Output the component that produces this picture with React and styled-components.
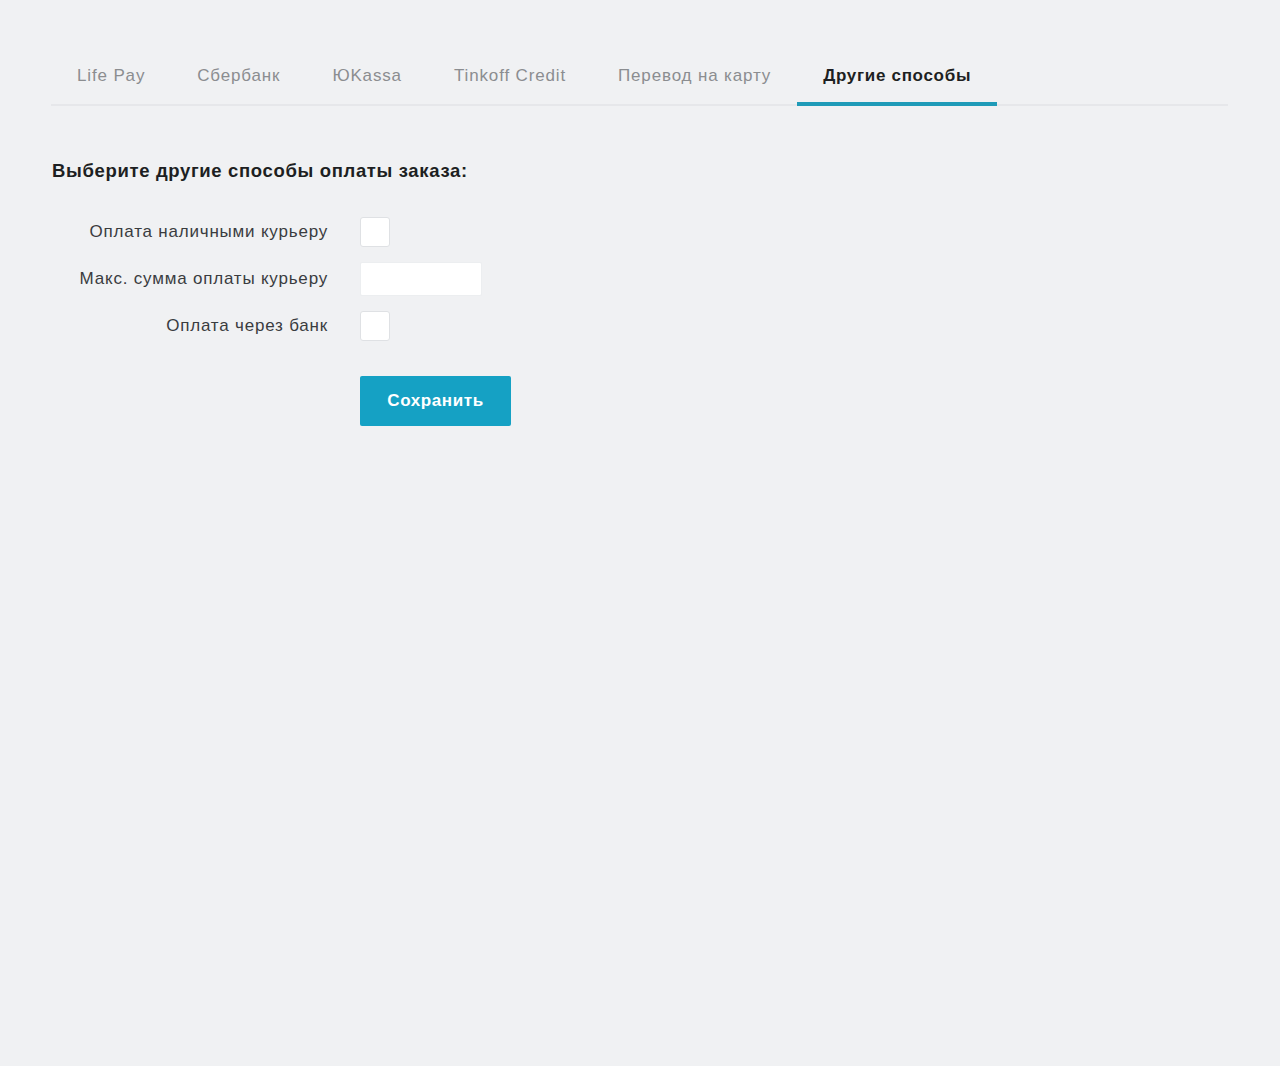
import React from "react";
import styled, { createGlobalStyle } from "styled-components";

const Global = createGlobalStyle`
  html, body { margin: 0; padding: 0; background: #f0f1f3; }
  body { font-family: "Liberation Sans", Arial, sans-serif; }
  * { box-sizing: border-box; }
`;

const Page = styled.div`
  min-height: 1066px;
  padding: 50px 52px 0 51px;
  background: #f0f1f3;
`;

const TabList = styled.div`
  display: flex;
  border-bottom: 2px solid #e6e7ea;
`;

const Tab = styled.div`
  padding: 16px 26px 16px;
  line-height: 20px;
  font-size: 17px;
  letter-spacing: ${p => (p.$active ? "0.7px" : "0.85px")};
  color: ${p => (p.$active ? "#1d1f22" : "#8b8d90")};
  font-weight: ${p => (p.$active ? 700 : 400)};
  border-bottom: 4px solid ${p => (p.$active ? "#1f9bb8" : "transparent")};
  margin-bottom: -2px;
  cursor: pointer;
`;

const Heading = styled.h2`
  margin: 54px 0 0 1px;
  font-size: 18.5px;
  line-height: 22px;
  font-weight: 700;
  color: #1d1f22;
  letter-spacing: 0.65px;
`;

const Form = styled.div`
  display: grid;
  grid-template-columns: 277px auto;
  column-gap: 32px;
  row-gap: 15px;
  margin-top: 35px;
  align-items: center;
  justify-items: start;
`;

const Label = styled.label`
  justify-self: end;
  font-size: 17px;
  color: #3a3c3f;
  letter-spacing: 0.8px;
`;

const Check = styled.div`
  width: 30px;
  height: 30px;
  background: #fff;
  border: 1px solid #dfe1e4;
  border-radius: 3px;
`;

const Input = styled.input`
  width: 122px;
  height: 34px;
  border: 1px solid #eceef0;
  border-radius: 2px;
  background: #fff;
  outline: none;
`;

const Button = styled.button`
  grid-column: 2;
  margin-top: 20px;
  width: 151px;
  height: 50px;
  border: none;
  border-radius: 2px;
  background: #15a1c4;
  color: #fff;
  font-family: inherit;
  font-size: 17px;
  font-weight: 700;
  letter-spacing: 0.6px;
  cursor: pointer;
`;

const tabs = ["Life Pay", "Сбербанк", "ЮKassa", "Tinkoff Credit", "Перевод на карту", "Другие способы"];

export default function App() {
  return (
    <>
      <Global />
      <Page>
        <TabList>
          {tabs.map((t, i) => (
            <Tab key={t} $active={i === tabs.length - 1}>{t}</Tab>
          ))}
        </TabList>
        <Heading>Выберите другие способы оплаты заказа:</Heading>
        <Form>
          <Label>Оплата наличными курьеру</Label>
          <Check />
          <Label>Макс. сумма оплаты курьеру</Label>
          <Input />
          <Label>Оплата через банк</Label>
          <Check />
          <Button>Сохранить</Button>
        </Form>
      </Page>
    </>
  );
}
